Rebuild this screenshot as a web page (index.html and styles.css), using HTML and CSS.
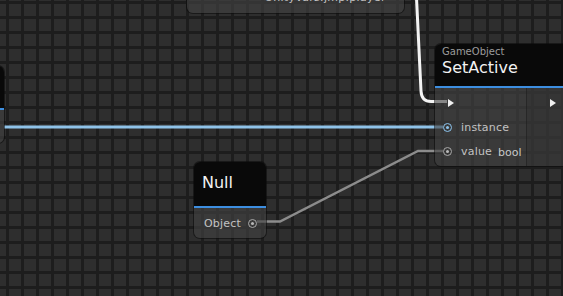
FILE: index.html
```html
<!DOCTYPE html>
<html lang="en">
<head>
  <meta charset="UTF-8">
  <title>Graph editor</title>
  <link rel="stylesheet" href="styles.css">
</head>
<body>
  <div class="canvas">
    <svg class="wires" width="563" height="296" viewBox="0 0 563 296">
      <path class="wire flow" d="M416.5,-2 L421,91 Q421.5,101.5 431,101.5 L447,101.5"/>
      <path class="wire data-blue" d="M4,127 L443,127"/>
      <path class="wire data-gray" d="M257,221.5 L280,221.5 L418,151 L443,151"/>
    </svg>

    <!-- node cut off at the top -->
    <div class="node node-top">
      <div class="node-body top-body">
        <span class="top-label">UnityVars.jmp.player</span>
        <span class="top-label dash">-</span>
      </div>
    </div>

    <!-- node cut off at the left -->
    <div class="node node-left">
      <div class="node-head"></div>
      <div class="node-body"></div>
    </div>

    <div class="node node-setactive">
      <div class="node-head">
        <span class="category">GameObject</span>
        <span class="title">SetActive</span>
      </div>
      <div class="node-body split">
        <div class="col-in">
          <div class="row flow-row"><span class="arrow"></span></div>
          <div class="row"><span class="port port-blue"></span><span class="label">instance</span></div>
          <div class="row"><span class="port"></span><span class="label">value</span><span class="type">bool</span></div>
        </div>
        <div class="col-out">
          <div class="row flow-row"><span class="arrow"></span></div>
        </div>
      </div>
    </div>

    <div class="node node-null">
      <div class="node-head">
        <span class="title">Null</span>
      </div>
      <div class="node-body">
        <div class="row out-row"><span class="label">Object</span><span class="port"></span></div>
      </div>
    </div>
  </div>
</body>
</html>
```

FILE: styles.css
```css
body {
  margin: 0;
  padding: 0;
  background: #2d2d2d;
  font-family: "DejaVu Sans", Verdana, sans-serif;
}
.canvas {
  position: relative;
  width: 563px;
  height: 296px;
  overflow: hidden;
  background-color: #2e2e2e;
  background-image:
    linear-gradient(to right, #1d1d1d 0 3px, transparent 3px),
    linear-gradient(to bottom, #1d1d1d 0 3px, transparent 3px);
  background-size: 15px 15px;
  background-position: 6px 1px;
}
.wires {
  position: absolute;
  left: 0;
  top: 0;
}
.wire {
  fill: none;
}
.wire.flow {
  stroke: #f4f4f4;
  stroke-width: 3;
}
.wire.data-blue {
  stroke: #8fc3e9;
  stroke-width: 3;
}
.wire.data-gray {
  stroke: #8c8c8c;
  stroke-width: 2.5;
}

.node {
  position: absolute;
  display: flex;
  flex-direction: column;
  border-radius: 6px;
  overflow: hidden;
  box-shadow: 0 0 0 1px rgba(10,10,10,0.55);
}
.node-head {
  background: #090909;
  height: 42px;
  border-bottom: 2px solid #3d8ee0;
  display: flex;
  flex-direction: column;
  justify-content: center;
  padding: 0 7px;
}
.node-body {
  background: rgba(66,66,66,0.62);
}
.category {
  font-size: 10px;
  color: #9c9c9c;
  line-height: 12px;
}
.title {
  font-size: 16px;
  color: #f2f2f2;
  line-height: 20px;
}

.node-top {
  left: 187px;
  top: -30px;
  width: 217px;
  height: 43px;
}
.top-body {
  flex: 1;
  display: flex;
  align-items: flex-end;
  justify-content: flex-end;
  gap: 8px;
  padding: 0 6px 9px 0;
}
.top-label {
  font-size: 11px;
  color: #c4c4c4;
  line-height: 12px;
  letter-spacing: 0.3px;
}

.node-left {
  left: -100px;
  top: 66px;
  width: 104px;
  height: 77px;
}
.node-left .node-body {
  flex: 1;
}

.node-setactive {
  left: 435px;
  top: 44px;
  width: 170px;
  height: 122px;
}
.node-setactive .node-head {
  justify-content: flex-start;
  padding-top: 2px;
  height: 40px;
}
.split {
  flex: 1;
  display: flex;
  padding-top: 3px;
}
.col-in {
  width: 91px;
}
.col-out {
  flex: 1;
  border-left: 1px solid rgba(30,30,30,0.6);
  background: rgba(40,40,40,0.25);
  margin-top: -3px;
  padding-top: 3px;
}
.row {
  height: 24px;
  display: flex;
  align-items: center;
  padding-left: 8px;
}
.flow-row {
  padding-left: 13px;
}
.col-out .flow-row {
  padding-left: 23px;
}
.arrow {
  width: 0;
  height: 0;
  border-top: 4px solid transparent;
  border-bottom: 4px solid transparent;
  border-left: 6px solid #f0f0f0;
}
.port {
  box-sizing: border-box;
  width: 9px;
  height: 9px;
  border-radius: 50%;
  border: 1.5px solid #a8a8a8;
  display: flex;
  align-items: center;
  justify-content: center;
  flex-shrink: 0;
}
.port::after {
  content: "";
  width: 3px;
  height: 3px;
  border-radius: 50%;
  background: #b8b8b8;
}
.port-blue {
  border-color: #8cc4ee;
}
.port-blue::after {
  background: #8cc4ee;
}
.label {
  font-size: 11px;
  color: #c2c2c2;
  margin-left: 9px;
  letter-spacing: 0.2px;
}
.type {
  font-size: 11px;
  color: #c8c8c8;
  margin-left: 6px;
  margin-top: 3px;
}

.node-null {
  left: 194px;
  top: 162px;
  width: 72px;
  height: 76px;
}
.node-null .node-head {
  padding-left: 8px;
  padding-bottom: 2px;
}
.node-null .node-body {
  flex: 1;
  display: flex;
  align-items: center;
}
.out-row {
  flex: 1;
  padding-left: 0;
  justify-content: space-between;
  padding-right: 9px;
}
.out-row .label {
  margin-left: 10px;
}
```
